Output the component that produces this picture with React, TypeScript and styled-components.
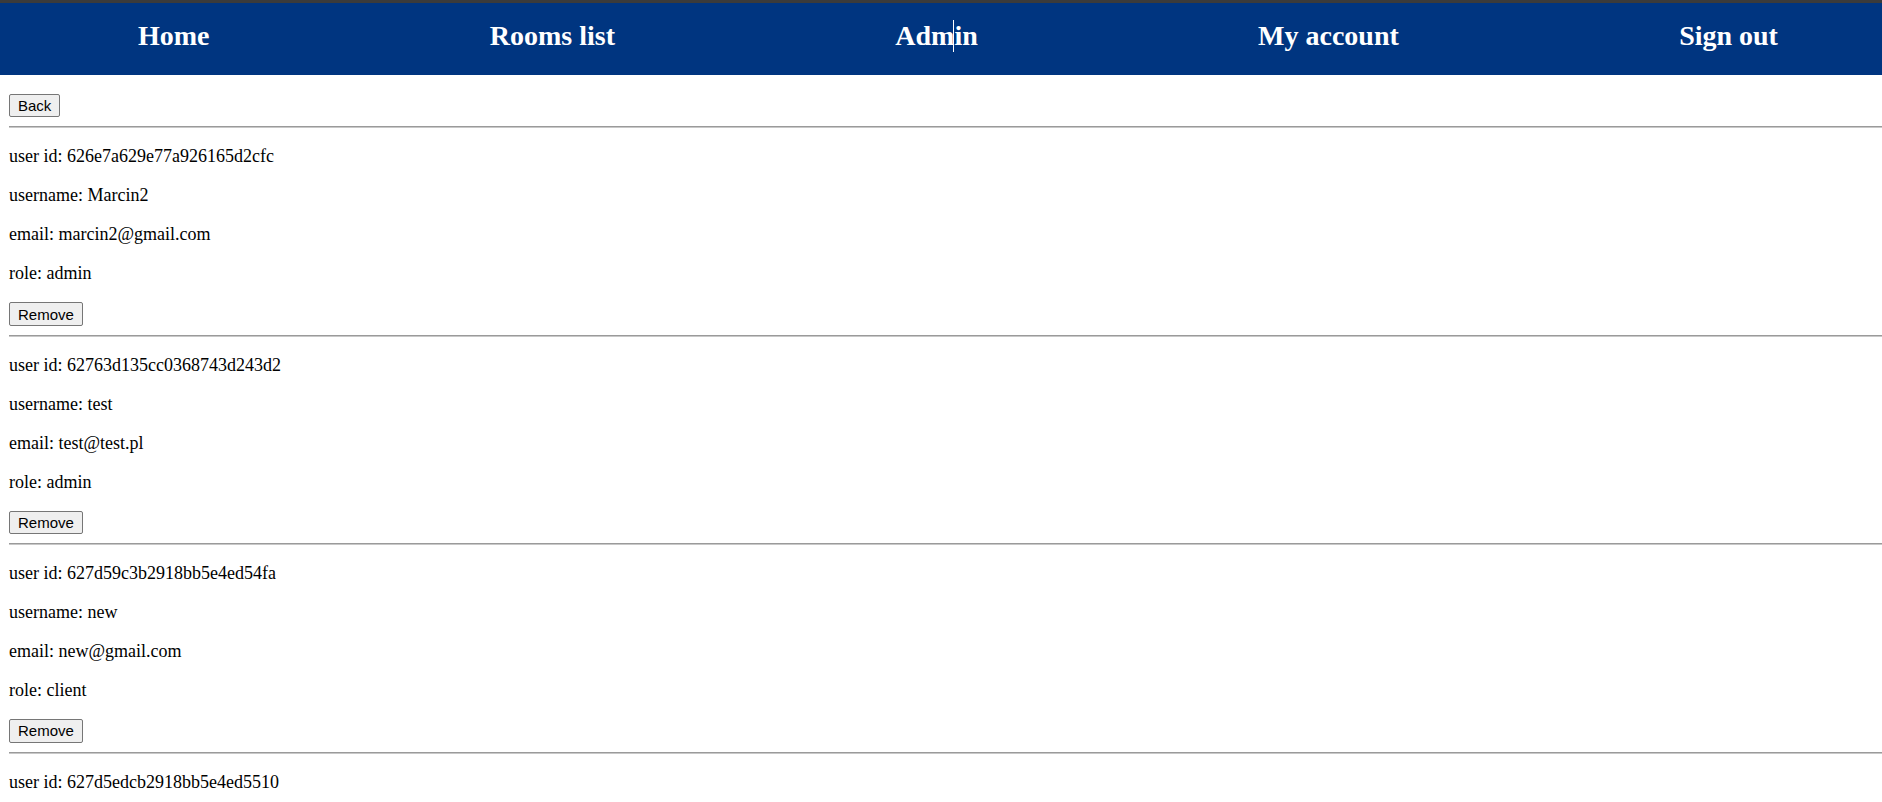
import React from "react";
import styled, { createGlobalStyle } from "styled-components";

const GlobalStyle = createGlobalStyle`
  html, body {
    margin: 0;
    padding: 0;
    background: #ffffff;
  }
  body {
    font-family: "Liberation Serif", "Times New Roman", serif;
    color: #000000;
  }
  #root {
    height: 100vh;
    overflow: hidden;
  }
`;

const Page = styled.div`
  display: flex;
  flex-direction: column;
`;

const TopStrip = styled.div`
  height: 3px;
  background: #3b3b3b;
`;

const NavBar = styled.nav`
  box-sizing: border-box;
  height: 72px;
  background: #003580;
  display: flex;
  justify-content: space-between;
  align-items: flex-start;
  padding: 17px 104px 0 138px;
`;

const NavLink = styled.a`
  position: relative;
  font-family: "Liberation Serif", "Times New Roman", serif;
  font-weight: bold;
  font-size: 28px;
  line-height: 32px;
  color: #ffffff;
  text-decoration: none;
  cursor: pointer;
`;

const TextCursor = styled.span`
  position: absolute;
  left: 58px;
  top: 0;
  width: 1px;
  height: 32px;
  background: #ffffff;
`;

const Content = styled.main`
  padding: 19px 0 0 9px;
`;

const Button = styled.button`
  display: block;
  box-sizing: border-box;
  height: 23.4px;
  padding: 0 8px;
  font-family: "Liberation Sans", Arial, sans-serif;
  font-size: 15px;
  line-height: 17px;
  color: #000000;
  background: #efefef;
  border: 1px solid #767676;
  border-radius: 2px;
`;

const Rule = styled.hr`
  margin: 9px 0;
  height: 0;
  border: none;
  border-top: 1px solid #9a9a9a;
  border-bottom: 1px solid #c8c8c8;
`;

const UserCard = styled.section``;

const Field = styled.p`
  margin: 18px 0;
  font-size: 18px;
  line-height: 21px;
`;

const CardButton = styled(Button)`
  margin-top: 18px;
`;

type User = {
  id: string;
  username: string;
  email: string;
  role: string;
};

const users: User[] = [
  { id: "626e7a629e77a926165d2cfc", username: "Marcin2", email: "marcin2@gmail.com", role: "admin" },
  { id: "62763d135cc0368743d243d2", username: "test", email: "test@test.pl", role: "admin" },
  { id: "627d59c3b2918bb5e4ed54fa", username: "new", email: "new@gmail.com", role: "client" },
  { id: "627d5edcb2918bb5e4ed5510", username: "client", email: "client@gmail.com", role: "client" },
];

const navItems = ["Home", "Rooms list", "Admin", "My account", "Sign out"];

export default function App() {
  return (
    <Page>
      <GlobalStyle />
      <TopStrip />
      <NavBar>
        {navItems.map((item) => (
          <NavLink key={item}>
            {item}
            {item === "Admin" && <TextCursor />}
          </NavLink>
        ))}
      </NavBar>
      <Content>
        <Button>Back</Button>
        <Rule />
        {users.map((u) => (
          <UserCard key={u.id}>
            <Field>user id: {u.id}</Field>
            <Field>username: {u.username}</Field>
            <Field>email: {u.email}</Field>
            <Field>role: {u.role}</Field>
            <CardButton>Remove</CardButton>
            <Rule />
          </UserCard>
        ))}
      </Content>
    </Page>
  );
}
